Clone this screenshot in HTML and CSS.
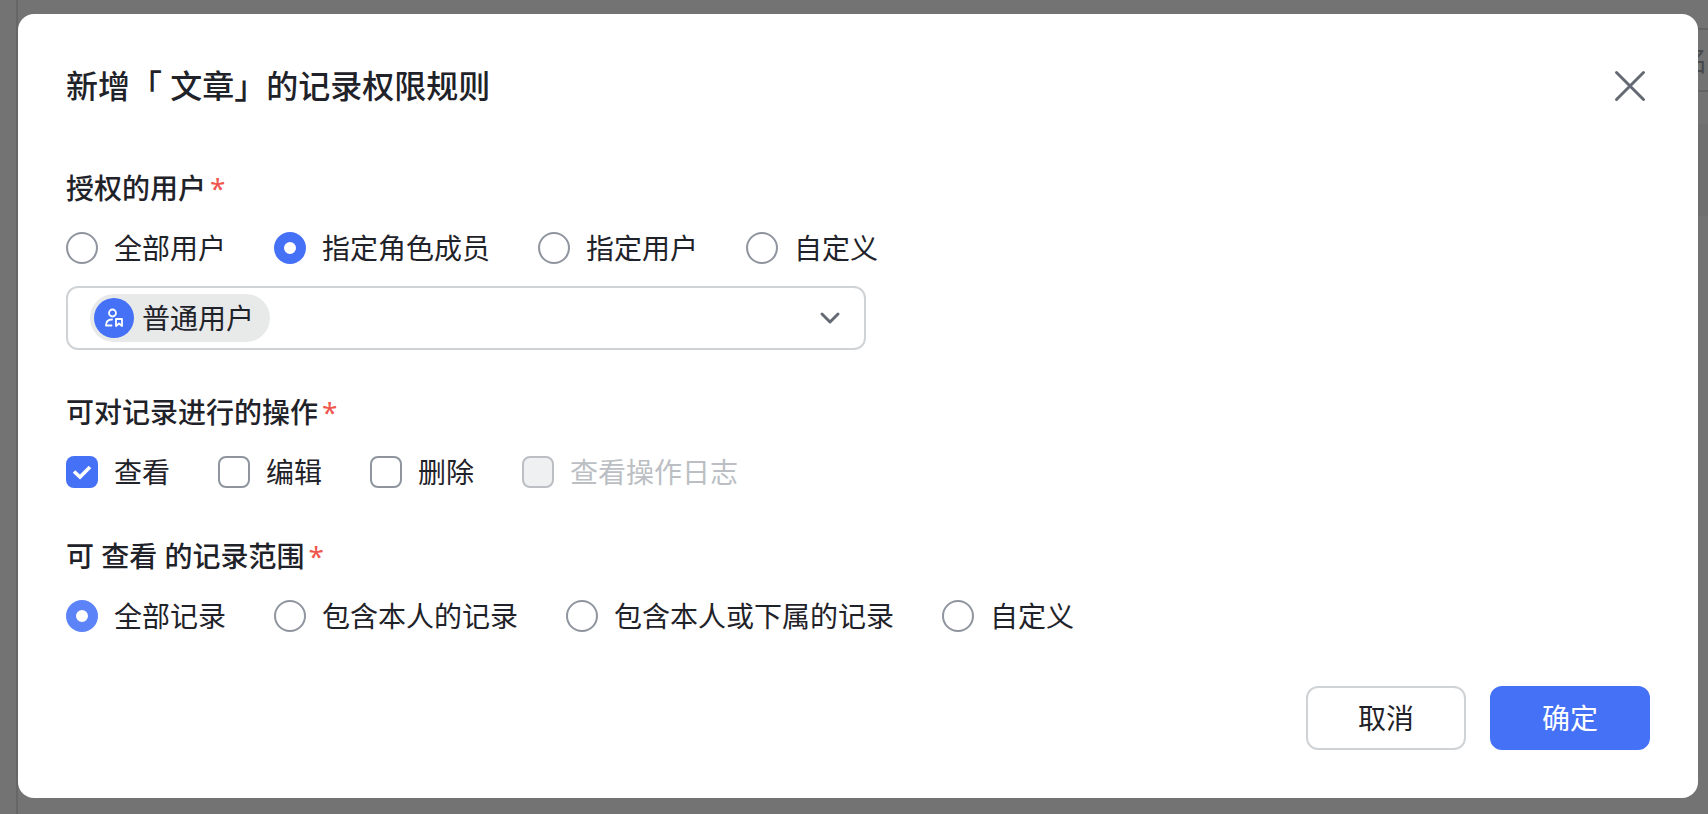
FILE: index.html
```html
<!doctype html>
<html lang="zh-CN">
<head>
  <meta charset="utf-8">
  <meta name="viewport" content="width=device-width, initial-scale=1">
  <title>记录权限规则</title>
  <link rel="stylesheet" href="styles.css">
</head>
<body>

<div class="page" aria-hidden="true">
  <div class="page-side"></div>
  <div class="page-main">
    <div class="page-field">名</div>
    <div class="page-band"></div>
  </div>
</div>

<div class="overlay">
  <form class="dialog" role="dialog" aria-labelledby="dialog-title">
    <header class="dialog-header">
      <h1 id="dialog-title">新增「 文章」的记录权限规则</h1>
      <button type="button" class="close" aria-label="关闭">
        <svg viewBox="0 0 40 40" width="40" height="40" fill="none" stroke="#646a73" stroke-width="3" stroke-linecap="round">
          <path d="M6.500 6.500l27 27M33.500 6.500l-27 27"/>
        </svg>
      </button>
    </header>

    <fieldset>
      <legend>授权的用户<span class="required">*</span></legend>
      <div class="options">
        <label><input type="radio" name="user">全部用户</label>
        <label><input type="radio" name="user" checked>指定角色成员</label>
        <label><input type="radio" name="user">指定用户</label>
        <label><input type="radio" name="user">自定义</label>
      </div>
      <div class="role-select">
        <span class="chip">
          <span class="avatar">
            <svg viewBox="0 0 20 20" width="20" height="20" fill="none" stroke="#fff" stroke-width="1.800" stroke-linejoin="round" stroke-linecap="round">
              <circle cx="8.500" cy="5" r="3.500"/>
              <path d="M8 11.500C4 11.500 2 13.500 2 17.500h5.500"/>
              <path d="M12 11h6v7l-3-2.500-3 2.500z"/>
            </svg>
          </span>
        </span>
        <select name="role" aria-label="角色">
          <option>普通用户</option>
        </select>
        <svg class="arrow" viewBox="0 0 24 24" width="24" height="24" fill="none" stroke="#646a73" stroke-width="3" stroke-linecap="round" stroke-linejoin="round">
          <path d="M4 8l8 8 8-8"/>
        </svg>
      </div>
    </fieldset>

    <fieldset>
      <legend>可对记录进行的操作<span class="required">*</span></legend>
      <div class="options">
        <label><input type="checkbox" name="view" checked>查看</label>
        <label><input type="checkbox" name="edit">编辑</label>
        <label><input type="checkbox" name="delete">删除</label>
        <label class="disabled"><input type="checkbox" name="log" disabled>查看操作日志</label>
      </div>
    </fieldset>

    <fieldset>
      <legend>可 查看 的记录范围<span class="required">*</span></legend>
      <div class="options">
        <label><input type="radio" name="scope" class="active" checked>全部记录</label>
        <label><input type="radio" name="scope">包含本人的记录</label>
        <label><input type="radio" name="scope">包含本人或下属的记录</label>
        <label><input type="radio" name="scope">自定义</label>
      </div>
    </fieldset>

    <footer class="dialog-footer">
      <button type="button" class="btn">取消</button>
      <button type="submit" class="btn btn-primary">确定</button>
    </footer>
  </form>
</div>

</body>
</html>
```
FILE: styles.css
```css
:root {
  --text-color: #1f2329;
  --muted-color: #bbbfc4;
  --control-border: #8f959e;
  --border-color: #d0d3d6;
  --primary-color: #4571f7;
  --primary-color-hover: #5c83f8;
  --required-color: #f0564d;
  --page-color: #737373;
}
*, *:before, *:after {
  box-sizing: border-box;
}
body {
  margin: 0;
  background: var(--page-color);
  color: var(--text-color);
  font-family: "Noto Sans", "Noto Sans CJK SC", sans-serif;
  font-size: 28px;
  line-height: 44px;
}

/* dimmed page behind the dialog */
.page {
  position: absolute;
  inset: 0;
  display: flex;
  overflow: hidden;
}
.page-side {
  width: 18px;
  border-right: 2px solid #666;
}
.page-main {
  flex: 1;
  padding-top: 28px;
}
.page-field {
  height: 64px;
  padding: 8px 0;
  border: solid #636465;
  border-width: 2px 0;
  color: #484a4d;
  text-align: right;
}
.page-band {
  height: 92px;
  margin-top: 32px;
  background: #6f6f6f;
}

.overlay {
  position: relative;
  padding: 14px 10px 16px 18px;
}
.dialog {
  padding: 48px;
  border-radius: 16px;
  background: #fff;
}
.dialog-header {
  display: flex;
  align-items: center;
  justify-content: space-between;
  margin-bottom: 56px;
}
h1 {
  margin: 0;
  font-size: 32px;
  font-weight: 500;
  line-height: 48px;
}
button,
select {
  font: inherit;
  color: inherit;
  cursor: pointer;
}
.close {
  display: flex;
  padding: 0;
  border: 0;
  background: none;
}

fieldset {
  min-width: 0;
  margin: 0 0 40px;
  padding: 0;
  border: 0;
}
legend {
  height: 44px;
  margin-bottom: 16px;
  padding: 0;
  font-weight: 500;
}
.required {
  margin-left: 4px;
  color: var(--required-color);
  font-weight: 400;
}
.options {
  display: flex;
  flex-wrap: wrap;
  column-gap: 48px;
}
.options label {
  display: flex;
  align-items: center;
  gap: 16px;
  cursor: pointer;
}
.options .disabled {
  color: var(--muted-color);
  cursor: not-allowed;
}

input {
  appearance: none;
  flex: none;
  width: 32px;
  height: 32px;
  margin: 0;
  border: 2px solid var(--control-border);
  background: #fff;
}
input[type="radio"] {
  border-radius: 50%;
}
input[type="radio"]:checked {
  border: 10px solid var(--primary-color);
}
input[type="radio"].active:checked {
  border-color: var(--primary-color-hover);
}
input[type="checkbox"] {
  border-radius: 8px;
}
input[type="checkbox"]:checked {
  border: 0;
  background: var(--primary-color) url("data:image/svg+xml,%3Csvg xmlns='http://www.w3.org/2000/svg' viewBox='0 0 32 32' fill='none' stroke='white' stroke-width='3.6'%3E%3Cpath d='M8 15.500l6 5.500 10-10'/%3E%3C/svg%3E");
}
input[type="checkbox"]:disabled {
  border-color: var(--muted-color);
  background: #eff0f1;
}

.role-select {
  position: relative;
  max-width: 800px;
  margin-top: 16px;
}
.role-select select {
  appearance: none;
  position: relative;
  display: block;
  width: 100%;
  height: 64px;
  padding: 0 64px 0 74px;
  border: 2px solid var(--border-color);
  border-radius: 12px;
  background: transparent;
}
.chip {
  position: absolute;
  top: 8px;
  left: 24px;
  width: 180px;
  padding: 4px;
  border-radius: 24px;
  background: #e8eae9;
}
.avatar {
  display: flex;
  align-items: center;
  justify-content: center;
  width: 40px;
  height: 40px;
  border-radius: 50%;
  background: var(--primary-color);
}
.arrow {
  position: absolute;
  top: 20px;
  right: 24px;
  pointer-events: none;
}

.dialog-footer {
  display: flex;
  justify-content: flex-end;
  gap: 24px;
  padding-top: 8px;
}
.btn {
  width: 160px;
  height: 64px;
  padding: 0;
  border: 2px solid var(--border-color);
  border-radius: 12px;
  background: #fff;
}
.btn-primary {
  border-color: var(--primary-color);
  background: var(--primary-color);
  color: #fff;
}
```
